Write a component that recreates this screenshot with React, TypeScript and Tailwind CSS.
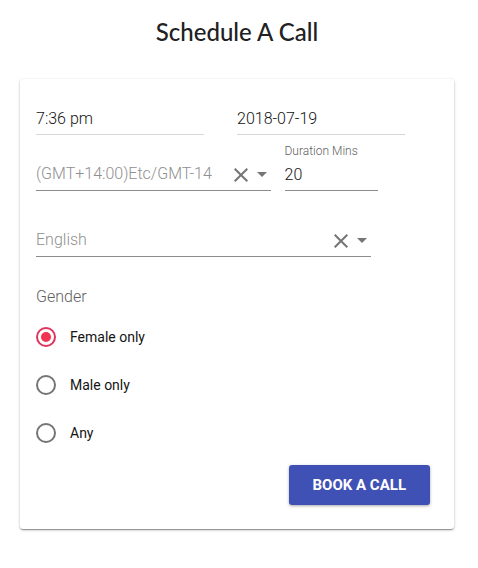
import { useState } from "react";

const ZONES = ["(GMT+14:00)Etc/GMT-14", "(GMT+00:00)Etc/UTC"];
const LANGUAGES = ["English", "Spanish", "French"];
const GENDERS = ["Female only", "Male only", "Any"];

export default function App() {
  const [time, setTime] = useState("7:36 pm");
  const [date, setDate] = useState("2018-07-19");
  const [zone, setZone] = useState(ZONES[0]);
  const [duration, setDuration] = useState("20");
  const [language, setLanguage] = useState(LANGUAGES[0]);
  const [gender, setGender] = useState(GENDERS[0]);

  return (
    <main className="pt-4 pr-6 pb-10 pl-5 font-['Roboto',sans-serif] text-[#141414]">
      <h1 className="text-center font-['Lato',sans-serif] text-2xl leading-8 font-medium text-[#212121]">
        Schedule A Call
      </h1>

      <form
        className="mt-[31px] rounded-[3px] bg-white px-4 py-6 shadow-[0_1px_3px_rgba(0,0,0,0.25),0_1px_1px_rgba(0,0,0,0.14),0_2px_1px_-1px_rgba(0,0,0,0.2)]"
        onSubmit={(e) => e.preventDefault()}
      >
        <div className="grid grid-cols-2">
          <input
            aria-label="Time"
            value={time}
            onChange={(e) => setTime(e.target.value)}
            className="h-8 w-5/6 border-b border-[#d6d6d6] text-base font-light outline-none"
          />
          <input
            aria-label="Date"
            value={date}
            onChange={(e) => setDate(e.target.value)}
            className="h-8 w-5/6 border-b border-[#d6d6d6] text-base font-light outline-none"
          />
        </div>

        <div className="mt-2 flex items-end gap-[14px]">
          <div className="w-7/12">
            <SelectField label="Time zone" value={zone} options={ZONES} onChange={setZone} />
          </div>
          <label className="flex w-[93px] flex-col">
            <span className="text-xs leading-4 font-light text-[#616161]">Duration Mins</span>
            <input
              inputMode="numeric"
              value={duration}
              onChange={(e) => setDuration(e.target.value)}
              className="h-8 border-b border-[#8c8c8c] text-base font-light outline-none"
            />
          </label>
        </div>

        <div className="mt-[34px] w-5/6">
          <SelectField label="Language" value={language} options={LANGUAGES} onChange={setLanguage} />
        </div>

        <fieldset className="mt-7">
          <legend className="text-base leading-6 font-light text-[#616161]">Gender</legend>
          <div className="mt-1">
            {GENDERS.map((g) => (
              <label key={g} className="flex h-12 items-center gap-[14px] text-sm">
                <input
                  type="radio"
                  name="gender"
                  checked={gender === g}
                  onChange={() => setGender(g)}
                  className="size-5 appearance-none rounded-full border-2 border-[#757575] bg-clip-content p-[3px] checked:border-[#e0345c] checked:bg-[#f23352]"
                />
                {g}
              </label>
            ))}
          </div>
        </fieldset>

        <div className="mt-2 flex justify-end pr-2">
          <button
            type="submit"
            className="h-10 rounded-[3px] bg-[#3f51b5] px-6 text-[15px] font-bold text-white uppercase shadow-[0_1px_3px_rgba(0,0,0,0.35)]"
          >
            Book a call
          </button>
        </div>
      </form>
    </main>
  );
}

type SelectFieldProps = {
  label: string;
  value: string;
  options: string[];
  onChange: (value: string) => void;
};

function SelectField({ label, value, options, onChange }: SelectFieldProps) {
  return (
    <div className="flex h-8 items-center gap-[9px] border-b border-[#8c8c8c] pr-1 text-[#757575]">
      <select
        aria-label={label}
        value={value}
        onChange={(e) => onChange(e.target.value)}
        className="h-full min-w-0 flex-1 appearance-none pb-[2px] text-base font-light text-[#8f8f8f] outline-none"
      >
        <option value="" />
        {options.map((o) => (
          <option key={o}>{o}</option>
        ))}
      </select>
      <button type="button" aria-label={`Clear ${label}`} onClick={() => onChange("")}>
        <svg viewBox="0 0 14 14" className="size-[14px]" stroke="currentColor" strokeWidth="2">
          <path d="M.7.7l12.6 12.6M13.3.7.7 13.3" />
        </svg>
      </button>
      <svg viewBox="0 0 10 5" className="h-[5px] w-[10px]" fill="currentColor" aria-hidden="true">
        <path d="M0 0l5 5 5-5z" />
      </svg>
    </div>
  );
}
